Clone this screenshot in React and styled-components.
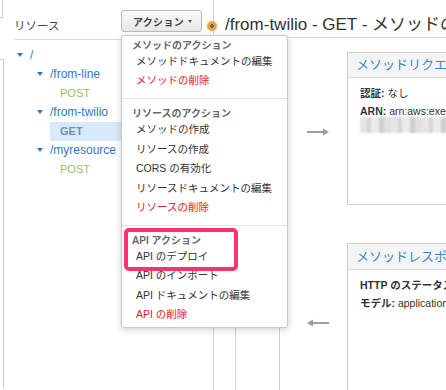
import React from 'react'
import styled, { createGlobalStyle } from 'styled-components'

const GlobalStyle = createGlobalStyle`
  html, body {
    margin: 0;
    padding: 0;
    background: #fff;
  }
  body {
    font-family: "Liberation Sans", "Noto Sans CJK JP", sans-serif;
    color: #333;
    overflow: hidden;
  }
`

const Page = styled.div`
  display: flex;
  width: 446px;
  height: 390px;
  overflow: hidden;
`

const EdgeStrip = styled.div`
  display: flex;
  flex-direction: column;
  width: 4px;
  flex-shrink: 0;
`

const EdgeTop = styled.div`
  height: 18px;
  width: 3px;
  border-right: 1px solid #d0d0d0;
  border-bottom: 1px solid #d0d0d0;
  box-sizing: border-box;
`

const EdgeBottom = styled.div`
  margin-top: 41px;
  margin-bottom: 2px;
  flex: 1;
  width: 4px;
  border-top: 1px solid #d0d0d0;
  border-right: 1px solid #d0d0d0;
  box-sizing: border-box;
`

const ResourcePanel = styled.div`
  width: 209px;
  flex-shrink: 0;
`

const PanelHeader = styled.div`
  display: flex;
  justify-content: space-between;
  align-items: flex-start;
  height: 40px;
  box-sizing: border-box;
  margin-left: 10px;
  padding: 10px 11px 0 0;
  border-bottom: 1px solid #dedede;
`

const PanelLabel = styled.span`
  margin-top: 9px;
  font-size: 11.5px;
  line-height: 14px;
  color: #444;
`

const ButtonWrap = styled.div`
  position: relative;
`

const ActionButton = styled.button`
  display: flex;
  align-items: center;
  justify-content: center;
  gap: 4px;
  width: 81px;
  height: 22px;
  padding: 0 0 0 2px;
  border: 1px solid #b9b9b9;
  border-radius: 3px;
  background: linear-gradient(#fafafa, #e7e7e7);
  font-family: inherit;
  font-size: 10px;
  font-weight: bold;
  color: #444;
  letter-spacing: 0.3px;
`

const Caret = styled.span`
  width: 0;
  height: 0;
  border-left: ${p => p.$size}px solid transparent;
  border-right: ${p => p.$size}px solid transparent;
  border-top: ${p => p.$size + 0.5}px solid ${p => p.$color};
  flex-shrink: 0;
`

const StatusDot = styled.span`
  position: absolute;
  left: calc(100% + 4.5px);
  top: 11px;
  width: 10px;
  height: 10px;
  border-radius: 50%;
  background: radial-gradient(circle, #3d6db3 0 1.6px, #f5a425 2px, #f3a02a 4px, rgba(246, 170, 60, 0.7) 5px);
  box-shadow: 0 0 2px rgba(245, 160, 40, 0.7);
`

const Dropdown = styled.div`
  position: absolute;
  top: calc(100% + 3px);
  left: 0;
  width: 167px;
  box-sizing: border-box;
  padding: 4px 0 3px;
  background: #fff;
  border: 1px solid #c9c9c9;
  border-radius: 3px;
  box-shadow: 0 2px 7px rgba(0, 0, 0, 0.18);
  z-index: 10;
`

const MenuHeader = styled.div`
  padding-left: 10px;
  font-size: 10px;
  line-height: 12px;
  font-weight: bold;
  color: #6a6a6a;
  white-space: nowrap;
`

const MenuItem = styled.div`
  padding-left: 14px;
  font-size: 10.5px;
  line-height: 19.4px;
  color: ${p => (p.$danger ? '#e3211c' : '#333')};
  white-space: nowrap;
`

const MenuDivider = styled.div`
  height: 1px;
  margin: 7.5px 0 9px;
  background: #e4e4e4;
`

const HighlightGroup = styled.div`
  position: relative;

  &::after {
    content: '';
    position: absolute;
    top: -7px;
    left: 2px;
    width: 114px;
    height: 43px;
    box-sizing: border-box;
    border: 4px solid #fd3370;
    border-radius: 5px;
    pointer-events: none;
  }
`

const Tree = styled.div`
  padding-top: 5.5px;
`

const FolderRow = styled.div`
  display: flex;
  align-items: center;
  height: 19px;
  padding-left: ${p => 13 + p.$level * 20}px;
  font-size: 12px;
  color: #3479bf;

  ${Caret} {
    margin-right: 7px;
  }
`

const MethodRow = styled.div`
  display: flex;
  align-items: center;
  height: 19px;
  margin-left: 46px;
  padding-left: 10px;
  font-size: 11px;
  font-weight: ${p => (p.$selected ? 'bold' : 'normal')};
  color: ${p => (p.$selected ? '#7191b6' : '#93c463')};
  background: ${p => (p.$selected ? '#d8e9f9' : 'transparent')};
`

const MainPanel = styled.div`
  display: flex;
  flex-direction: column;
  flex: 1;
  min-width: 0;
  border-left: 1px solid #d2d2d2;
`

const TitleBar = styled.div`
  height: 38px;
  box-sizing: border-box;
  padding: 13px 0 0 11px;
  border-bottom: 1px solid #dcdcdc;
  font-size: 17px;
  line-height: 24px;
  color: #333;
  white-space: nowrap;
  overflow: hidden;
`

const Body = styled.div`
  display: flex;
  flex: 1;
  min-height: 0;
`

const ClientColumn = styled.div`
  width: 43px;
  margin-left: 21px;
  flex-shrink: 0;
  border-left: 1px solid #d2d2d2;
  border-right: 1px solid #d2d2d2;
`

const Stage = styled.div`
  display: flex;
  flex-direction: column;
  gap: 38px;
  flex: 1;
  min-width: 0;
  padding-top: 14px;
  overflow: hidden;
`

const StageRow = styled.div`
  display: flex;
  height: ${p => p.$height}px;
  flex-shrink: 0;
`

const ArrowCell = styled.div`
  width: 67px;
  flex-shrink: 0;
  padding: 70px 0 0 27px;
  box-sizing: border-box;
`

const Card = styled.div`
  width: 200px;
  flex-shrink: 0;
  border: 1px solid #cfcfcf;
  box-sizing: border-box;
`

const CardHeader = styled.div`
  height: ${p => p.$height}px;
  box-sizing: border-box;
  padding-left: 8px;
  background: #f4f4f4;
  border-bottom: 1px solid #dadada;
  font-size: 13px;
  line-height: ${p => p.$height - 1}px;
  color: #3b88c9;
  white-space: nowrap;
`

const CardBody = styled.div`
  padding: 6px 0 0 12px;
  font-size: 10.5px;
  color: #333;
`

const CardLine = styled.div`
  line-height: 18px;
  white-space: nowrap;

  b {
    font-weight: bold;
  }
`

const Redacted = styled.div`
  height: 16px;
  margin-top: -3px;
  width: 180px;
  background: repeating-linear-gradient(
    90deg,
    #e6e6e6 0 7px,
    #d5d5d5 7px 11px,
    #ececec 11px 19px,
    #cdcdcd 19px 24px,
    #e1e1e1 24px 31px
  );
  filter: blur(1px);
`

const Arrow = ({ left }) => (
  <svg width="22" height="8" viewBox="0 0 22 8">
    {left ? (
      <>
        <line x1="5" y1="4" x2="22" y2="4" stroke="#9d9d9d" strokeWidth="2" />
        <polygon points="0,4 6,0.5 6,7.5" fill="#9d9d9d" />
      </>
    ) : (
      <>
        <line x1="0" y1="4" x2="17" y2="4" stroke="#9d9d9d" strokeWidth="2" />
        <polygon points="22,4 16,0.5 16,7.5" fill="#9d9d9d" />
      </>
    )}
  </svg>
)

const tree = [
  { type: 'folder', level: 0, name: '/' },
  { type: 'folder', level: 1, name: '/from-line' },
  { type: 'method', name: 'POST' },
  { type: 'folder', level: 1, name: '/from-twilio' },
  { type: 'method', name: 'GET', selected: true },
  { type: 'folder', level: 1, name: '/myresource' },
  { type: 'method', name: 'POST' },
]

const App = () => (
  <Page>
    <GlobalStyle />
    <EdgeStrip>
      <EdgeTop />
      <EdgeBottom />
    </EdgeStrip>

    <ResourcePanel>
      <PanelHeader>
        <PanelLabel>リソース</PanelLabel>
        <ButtonWrap>
          <ActionButton>
            アクション
            <Caret $size={2.5} $color="#555" />
          </ActionButton>
          <StatusDot />
          <Dropdown>
            <MenuHeader>メソッドのアクション</MenuHeader>
            <MenuItem>メソッドドキュメントの編集</MenuItem>
            <MenuItem $danger>メソッドの削除</MenuItem>
            <MenuDivider />
            <MenuHeader>リソースのアクション</MenuHeader>
            <MenuItem>メソッドの作成</MenuItem>
            <MenuItem>リソースの作成</MenuItem>
            <MenuItem>CORS の有効化</MenuItem>
            <MenuItem>リソースドキュメントの編集</MenuItem>
            <MenuItem $danger>リソースの削除</MenuItem>
            <MenuDivider />
            <HighlightGroup>
              <MenuHeader>API アクション</MenuHeader>
              <MenuItem>API のデプロイ</MenuItem>
            </HighlightGroup>
            <MenuItem>API のインポート</MenuItem>
            <MenuItem>API ドキュメントの編集</MenuItem>
            <MenuItem $danger>API の削除</MenuItem>
          </Dropdown>
        </ButtonWrap>
      </PanelHeader>

      <Tree>
        {tree.map((node, i) =>
          node.type === 'folder' ? (
            <FolderRow key={i} $level={node.level}>
              <Caret $size={3.5} $color="#3479bf" />
              {node.name}
            </FolderRow>
          ) : (
            <MethodRow key={i} $selected={node.selected}>
              {node.name}
            </MethodRow>
          )
        )}
      </Tree>
    </ResourcePanel>

    <MainPanel>
      <TitleBar>/from-twilio - GET - メソッドの実行</TitleBar>
      <Body>
        <ClientColumn />
        <Stage>
          <StageRow $height={153}>
            <ArrowCell>
              <Arrow />
            </ArrowCell>
            <Card>
              <CardHeader $height={25}>メソッドリクエスト</CardHeader>
              <CardBody>
                <CardLine>
                  <b>認証:</b> なし
                </CardLine>
                <CardLine>
                  <b>ARN:</b> arn:aws:execute-api:ap-northeast-1
                </CardLine>
                <Redacted />
              </CardBody>
            </Card>
          </StageRow>
          <StageRow $height={160}>
            <ArrowCell>
              <Arrow left />
            </ArrowCell>
            <Card>
              <CardHeader $height={26}>メソッドレスポンス</CardHeader>
              <CardBody>
                <CardLine>
                  <b>HTTP のステータス: 200</b>
                </CardLine>
                <CardLine>
                  <b>モデル:</b> application/json =&gt; Empty
                </CardLine>
              </CardBody>
            </Card>
          </StageRow>
        </Stage>
      </Body>
    </MainPanel>
  </Page>
)

export default App
